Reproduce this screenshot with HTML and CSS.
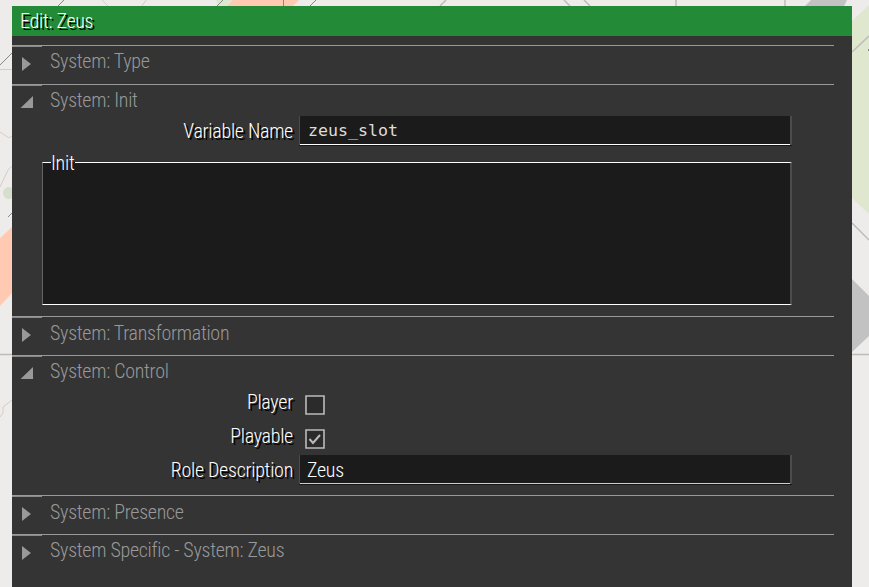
FILE: index.html
```
<!DOCTYPE html>
<html lang="en">
<head>
<meta charset="utf-8">
<title>Edit: Zeus</title>
<link rel="stylesheet" href="styles.css">
</head>
<body>
<svg class="map" width="869" height="587" viewBox="0 0 869 587" aria-hidden="true">
  <path fill="#dfe7cf" d="M852 21L869 5V214L852 198zM216 0h17l-6 6h-9z"/>
  <path fill="#ffcab1" d="M227 6l6-6h66l-6 6zM0 238l12-11v66L0 306z"/>
  <path fill="#c2c2c2" d="M805 6l6-6h36l-3 6zM852 279l17 17v40l-17 16z"/>
  <circle cx="9" cy="193" r="6" fill="#d5dfcc"/>
  <g fill="none" stroke="#bcbcbc" stroke-width="1.5">
    <path d="M852 52l17-16M852 223l17 17M852 354.500h17M0 354.500h12M785 0v6M676 0v6M584 0l6 6M564 0l6 6M446 0l-6 6"/>
    <path stroke="#888" stroke-width="1" d="M0 65l12-12M58 6l6-6M217 6l6-6M283.500 0v6M310 6l6-6M8 217l4-4M868.500 49v2"/>
    <path stroke="#d8cbc5" stroke-width="1" d="M0 69.500h12M102 0l6 6M146 0l-4 6M0 132l9 6 3-2M0 187l8-17 4-4M0 417l3-4v-6l9-7"/>
  </g>
</svg>
<main class="dialog">
  <header class="title"><span class="label">Edit: Zeus</span></header>
  <div class="body">
    <section class="group">
      <h2 class="heading"><svg class="arrow" viewBox="0 0 14 16"><path d="M2 1v14l9-7z"/></svg>System: Type</h2>
    </section>
    <section class="group init">
      <h2 class="heading open"><svg class="arrow" viewBox="0 0 14 16"><path d="M13 2v12H.500z"/></svg>System: Init</h2>
      <div class="row"><span class="label name">Variable Name</span><div class="field code bright">zeus_slot</div></div>
      <fieldset class="area"><legend>Init</legend></fieldset>
    </section>
    <section class="group">
      <h2 class="heading low"><svg class="arrow" viewBox="0 0 14 16"><path d="M2 1v14l9-7z"/></svg>System: Transformation</h2>
    </section>
    <section class="group control">
      <h2 class="heading open"><svg class="arrow" viewBox="0 0 14 16"><path d="M13 2v12H.500z"/></svg>System: Control</h2>
      <div class="row check"><span class="label name">Player</span><svg class="box" viewBox="0 0 20 20"><path d="M1 1h18v18H1z"/></svg></div>
      <div class="row check"><span class="label name">Playable</span><svg class="box" viewBox="0 0 20 20"><path d="M1 1h18v18H1z"/><path class="tick" d="M4.500 10l3.500 4 7-8"/></svg></div>
      <div class="row"><span class="label name">Role Description</span><div class="field">Zeus</div></div>
    </section>
    <section class="group">
      <h2 class="heading low"><svg class="arrow" viewBox="0 0 14 16"><path d="M2 1v14l9-7z"/></svg>System: Presence</h2>
    </section>
    <section class="group">
      <h2 class="heading"><svg class="arrow" viewBox="0 0 14 16"><path d="M2 1v14l9-7z"/></svg>System Specific - System: Zeus</h2>
    </section>
  </div>
</main>
</body>
</html>
```

FILE: styles.css
```
* { box-sizing: border-box; }
body {
  margin: 0;
  height: 587px;
  overflow: hidden;
  background: #edecea;
  font: 300 20px/24px "Roboto Condensed", Roboto, sans-serif;
  font-stretch: 75%;
  letter-spacing: -0.28px;
}
.map { position: absolute; left: 0; top: 0; z-index: -1; }
.dialog {
  width: 840px;
  height: 581px;
  margin: 6px 0 0 12px;
  background: #343434;
  overflow: hidden;
  display: flow-root;
}
.title { height: 30px; padding: 3px 8px; background: #238b37; }
.label { color: #fff; text-shadow: 2px 2px 0 #000; }
.body { padding: 9px 18px 0 0; }
.group {
  height: 39px;
  border-top: 1px solid #999;
  background: linear-gradient(#8a8a8a, #8a8a8a) 0 0 / 30px 1px no-repeat;
}
.init { height: 232px; }
.control { height: 140px; }
.heading {
  display: flex;
  gap: 16px;
  height: 31px;
  margin: 0;
  padding: 3px 0 0 8px;
  font: inherit;
  color: #999;
}
.low { padding-top: 4px; }
.arrow { width: 14px; height: 16px; margin-top: 7px; fill: #999; }
.low .arrow, .open .arrow { margin-top: 6px; }
.row { display: flex; height: 29px; margin-right: 42px; }
.name { width: 281px; margin-right: 6px; padding-top: 3px; text-align: right; }
.field {
  flex: 1;
  padding: 3px 7px;
  color: #fff;
  background: #1b1b1b;
  border: solid #4c4c4c;
  border-width: 0 2px 0 1px;
  box-shadow: inset 0 -1px #ccc, 0 1px #171717;
}
.bright { box-shadow: inset 0 -1px #fff, 0 1px #171717; }
.code { padding-left: 8px; font: 16.6px/24px "DejaVu Sans Mono", monospace; letter-spacing: 0; color: #ddd; }
.area {
  width: 750px;
  height: 156px;
  margin: 4px 0 0 30px;
  padding: 0;
  border: 1px solid #fff;
  border-left-color: #666;
  border-right: 2px solid #4c4c4c;
  background: #1b1b1b;
}
.area legend { margin-left: 8px; padding: 2px 1px 0 0; color: #fff; }
.check { height: 34px; }
.box {
  width: 20px;
  height: 20px;
  margin: 8px 0 0 6px;
  fill: #2b2b2b;
  stroke: #bbb;
  stroke-width: 1.600;
}
.box .tick { fill: none; stroke-width: 2; }
```
